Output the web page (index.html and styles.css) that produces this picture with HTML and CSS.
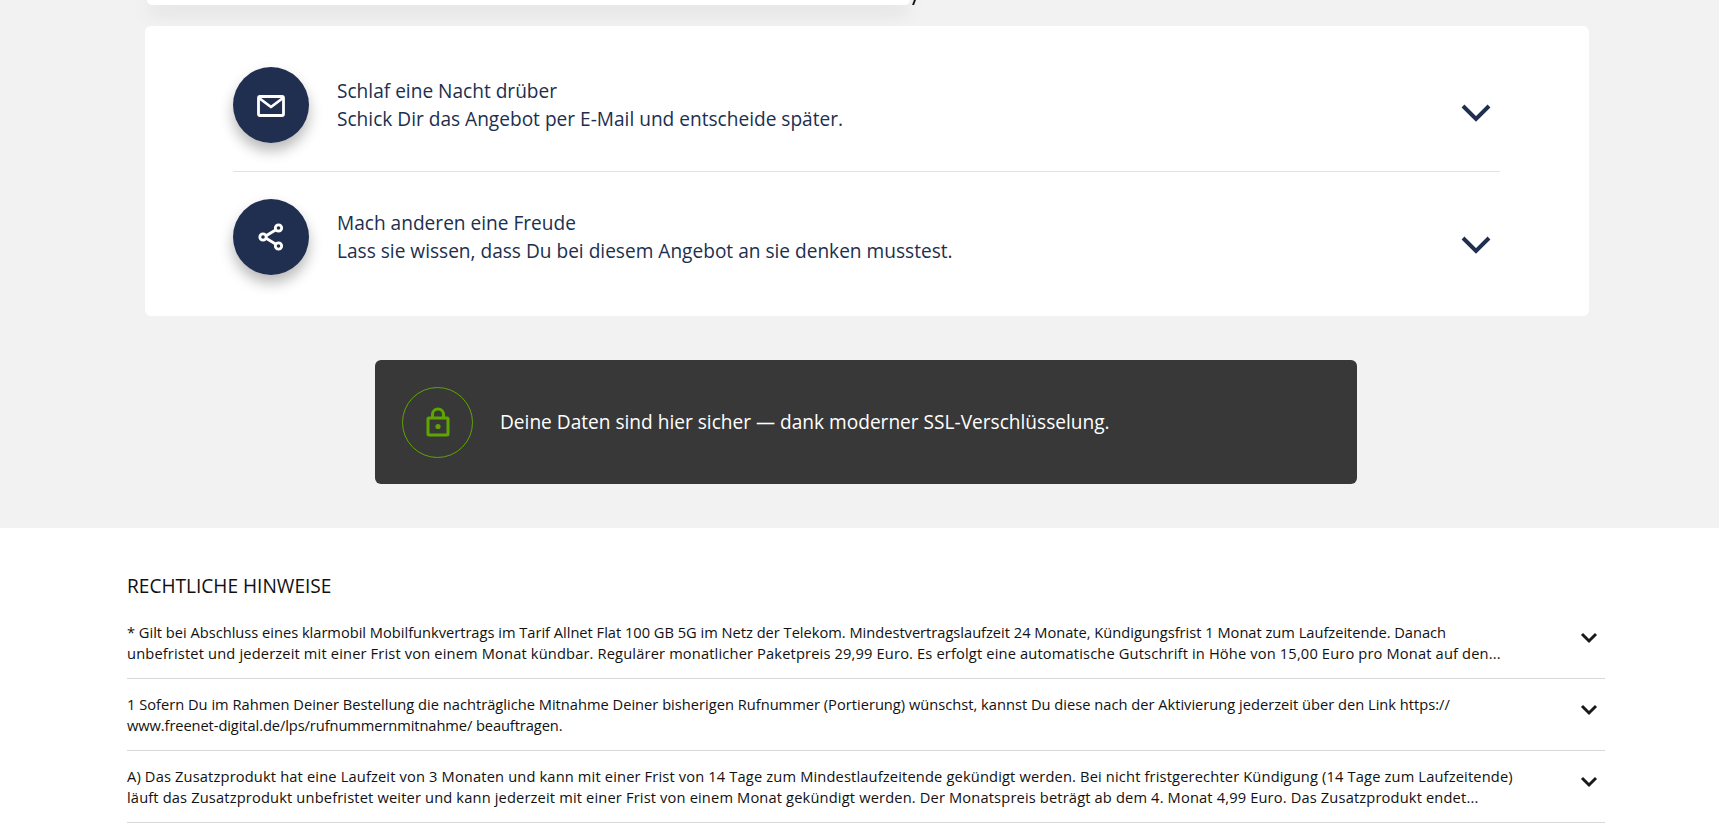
FILE: index.html
```html
<!DOCTYPE html>
<html lang="de">
<head>
    <meta charset="UTF-8">
    <meta name="viewport" content="width=device-width, initial-scale=1.0">
    <title>Angebot</title>
    <link rel="stylesheet" href="styles.css">
</head>
<body>
    <section class="offer-area">
        <div class="top-card"><span class="top-card-mark"></span></div>

        <div class="actions">
            <div class="action">
                <div class="action-icon">
                    <svg class="mail-icon" width="28" height="24" viewBox="0 0 28 24" fill="none" stroke="#fff" stroke-width="2.800" stroke-linejoin="round">
                        <rect x="1.500" y="2.500" width="25" height="19" rx="1.500"/>
                        <path d="M2 4 14 13 26 4"/>
                    </svg>
                </div>
                <p class="action-text">Schlaf eine Nacht drüber<br>Schick Dir das Angebot per E-Mail und entscheide später.</p>
                <svg class="action-chevron" width="30" height="18" viewBox="0 0 30 18" fill="none" stroke="#202f4f" stroke-width="4">
                    <path d="M2 2 15 15 28 2"/>
                </svg>
            </div>
            <div class="action">
                <div class="action-icon">
                    <svg width="28" height="28" viewBox="0 0 28 28" fill="none" stroke="#fff" stroke-width="2.800">
                        <path d="M7 14 21 5.500M7 14 21 22.500"/>
                        <circle cx="6" cy="14" r="3.200" fill="#202f4f"/>
                        <circle cx="21.500" cy="5" r="3.200" fill="#202f4f"/>
                        <circle cx="21.500" cy="23" r="3.200" fill="#202f4f"/>
                    </svg>
                </div>
                <p class="action-text">Mach anderen eine Freude<br>Lass sie wissen, dass Du bei diesem Angebot an sie denken musstest.</p>
                <svg class="action-chevron" width="30" height="18" viewBox="0 0 30 18" fill="none" stroke="#202f4f" stroke-width="4">
                    <path d="M2 2 15 15 28 2"/>
                </svg>
            </div>
        </div>

        <div class="ssl-box">
            <div class="ssl-icon">
                <svg width="24" height="30" viewBox="0 0 24 30" fill="none" stroke="#5ea500" stroke-width="3" stroke-linejoin="round">
                    <rect x="2" y="11" width="20" height="17" rx="1"/>
                    <path d="M6.500 11V7.500a5.500 5.500 0 0 1 11 0V11"/>
                    <circle cx="12" cy="19.500" r="2.600" fill="#5ea500" stroke="none"/>
                </svg>
            </div>
            <p class="ssl-text">Deine Daten sind hier sicher — dank moderner SSL-Verschlüsselung.</p>
        </div>
    </section>

    <section class="legal">
        <h2 class="legal-title">RECHTLICHE HINWEISE</h2>

        <div class="legal-item">
            <p class="legal-text"><span class="line-snug">* Gilt bei Abschluss eines klarmobil Mobilfunkvertrags im Tarif Allnet Flat 100 GB 5G im Netz der Telekom. Mindestvertragslaufzeit 24 Monate, Kündigungsfrist 1 Monat zum Laufzeitende. Danach</span><br><span class="line-wide">unbefristet und jederzeit mit einer Frist von einem Monat kündbar. Regulärer monatlicher Paketpreis 29,99 Euro. Es erfolgt eine automatische Gutschrift in Höhe von 15,00 Euro pro Monat auf den...</span></p>
            <svg class="legal-chevron" width="18" height="12" viewBox="0 0 18 12" fill="none" stroke="#1a1a1a" stroke-width="3">
                <path d="M2 2 9 9 16 2"/>
            </svg>
        </div>
        <div class="legal-item">
            <p class="legal-text">1 Sofern Du im Rahmen Deiner Bestellung die nachträgliche Mitnahme Deiner bisherigen Rufnummer (Portierung) wünschst, kannst Du diese nach der Aktivierung jederzeit über den Link https://<br><span class="line-tight">www.freenet-digital.de/lps/rufnummernmitnahme/ beauftragen.</span></p>
            <svg class="legal-chevron" width="18" height="12" viewBox="0 0 18 12" fill="none" stroke="#1a1a1a" stroke-width="3">
                <path d="M2 2 9 9 16 2"/>
            </svg>
        </div>
        <div class="legal-item">
            <p class="legal-text"><span class="line-wide">A) Das Zusatzprodukt hat eine Laufzeit von 3 Monaten und kann mit einer Frist von 14 Tage zum Mindestlaufzeitende gekündigt werden. Bei nicht fristgerechter Kündigung (14 Tage zum Laufzeitende)</span><br><span class="line-wide">läuft das Zusatzprodukt unbefristet weiter und kann jederzeit mit einer Frist von einem Monat gekündigt werden. Der Monatspreis beträgt ab dem 4. Monat 4,99 Euro. Das Zusatzprodukt endet...</span></p>
            <svg class="legal-chevron" width="18" height="12" viewBox="0 0 18 12" fill="none" stroke="#1a1a1a" stroke-width="3">
                <path d="M2 2 9 9 16 2"/>
            </svg>
        </div>
    </section>
</body>
</html>
```

FILE: styles.css
```css
html, body {
    margin: 0;
    padding: 0;
    height: 840px;
    overflow: hidden;
    background: #fff;
    font-family: "Open Sans", "Noto Sans", sans-serif;
}
p, h2 {
    margin: 0;
}
.offer-area {
    height: 528px;
    box-sizing: border-box;
    background: #f2f2f2;
    padding: 0 130px 0 145px;
}
.top-card {
    position: relative;
    width: 763px;
    height: 5px;
    margin-left: 2px;
    background: #fff;
    border-radius: 0 0 6px 6px;
    box-shadow: 0 5px 20px rgba(0, 0, 0, 0.2);
}
.top-card-mark {
    position: absolute;
    right: -5px;
    top: 0;
    width: 2px;
    height: 5px;
    background: #111;
    transform: skewX(-20deg);
}
.actions {
    margin-top: 21px;
    width: 1444px;
    height: 290px;
    box-sizing: border-box;
    padding: 14px 89px 13px 88px;
    background: #fff;
    border-radius: 6px;
}
.action {
    display: flex;
    align-items: center;
    height: 131px;
    box-sizing: border-box;
    padding-bottom: 1px;
}
.action + .action {
    border-top: 1px solid #e2e2e2;
    padding-bottom: 0;
}
.action-icon {
    display: flex;
    align-items: center;
    justify-content: center;
    flex: none;
    width: 76px;
    height: 76px;
    border-radius: 50%;
    background: #202f4f;
    box-shadow: 0 8px 14px rgba(0, 0, 0, 0.28);
}
.mail-icon {
    margin-top: 2px;
}
.action-text {
    flex: 1;
    margin-left: 28px;
    font-size: 19.100px;
    line-height: 28px;
    color: #202f4f;
}
.action-chevron {
    flex: none;
    margin: 16px 9px 0 0;
}
.ssl-box {
    display: flex;
    align-items: center;
    width: 982px;
    height: 124px;
    box-sizing: border-box;
    margin: 44px 0 0 230px;
    padding-left: 27px;
    background: #383838;
    border-radius: 6px;
}
.ssl-icon {
    display: flex;
    align-items: center;
    justify-content: center;
    flex: none;
    width: 71px;
    height: 71px;
    box-sizing: border-box;
    border: 1px solid #5ea500;
    border-radius: 50%;
}
.ssl-text {
    margin-left: 27px;
    font-size: 19.100px;
    color: #fff;
}
.legal {
    padding: 44px 114px 0 127px;
}
.legal-title {
    font-size: 19.100px;
    font-weight: 400;
    line-height: 28px;
    color: #111;
}
.legal-item {
    display: flex;
    align-items: flex-start;
    height: 72px;
    box-sizing: border-box;
    padding-top: 15px;
    border-bottom: 1px solid #d8d8d8;
}
.legal-item:first-of-type {
    margin-top: 7px;
}
.legal-text {
    flex: 1;
    font-size: 14.670px;
    line-height: 21px;
    color: #111;
}
.line-wide {
    letter-spacing: 0.150px;
}
.line-snug {
    letter-spacing: -0.015px;
}
.line-tight {
    letter-spacing: -0.090px;
}
.legal-chevron {
    flex: none;
    margin: 10px 7px 0 55px;
}
```
